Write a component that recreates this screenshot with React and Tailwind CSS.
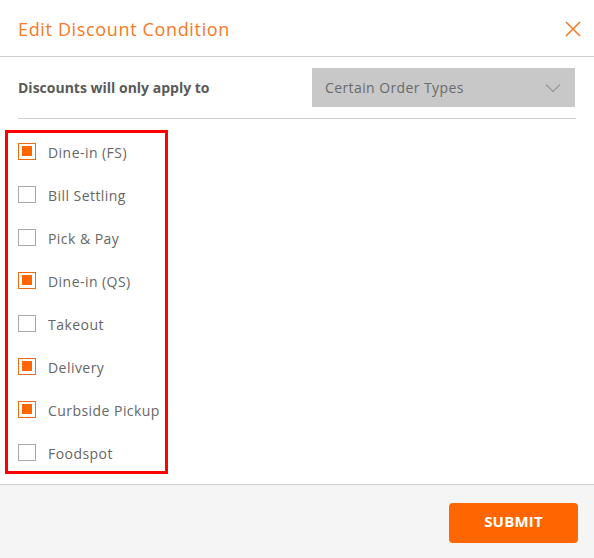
import React from "react";

const items = [
  ["Dine-in (FS)", true],
  ["Bill Settling", false],
  ["Pick & Pay", false],
  ["Dine-in (QS)", true],
  ["Takeout", false],
  ["Delivery", true],
  ["Curbside Pickup", true],
  ["Foodspot", false],
];

function Box({ checked }) {
  return checked ? (
    <div className="w-[18px] h-[17px] border border-[#f26a10] flex items-center justify-center bg-white">
      <div className="w-[10px] h-[10px] bg-[#ff6600]" />
    </div>
  ) : (
    <div className="w-[18px] h-[17px] border border-[#a8a8a8] bg-white" />
  );
}

export default function App() {
  return (
    <div
      className="w-[594px] h-[558px] bg-white flex flex-col"
      style={{ fontFamily: '"Open Sans", "Liberation Sans", sans-serif' }}
    >
      <div className="h-[57px] border-b border-[#cfcfcf] flex items-center justify-between pl-[18px] pr-[12px] pt-[3px] shrink-0">
        <div className="text-[18px] text-[#f47a25] tracking-[0.65px]">Edit Discount Condition</div>
        <svg width="18" height="18" viewBox="0 0 18 18" className="mt-[-2px]">
          <path d="M2 2 L16 16 M16 2 L2 16" stroke="#f47a25" strokeWidth="1.6" fill="none" />
        </svg>
      </div>
      <div className="px-[18px] shrink-0">
        <div className="flex items-center justify-between py-[11px] border-b border-[#cfcfcf]">
          <div className="text-[14px] font-bold text-[#5a5a5a]">Discounts will only apply to</div>
          <div className="w-[263px] h-[39px] bg-[#c8c8c8] flex items-center justify-between pl-[13px] pr-[14px] mr-[1px]">
            <span className="text-[14px] text-[#6a6a6a] tracking-[0.4px]">Certain Order Types</span>
            <svg width="16" height="10" viewBox="0 0 16 10">
              <path d="M1 1.5 L8 8.5 L15 1.5" stroke="#9a9a9a" strokeWidth="1.3" fill="none" />
            </svg>
          </div>
        </div>
      </div>
      <div className="flex-1 pl-[5px] pt-[11px]">
        <div className="w-[163px] border-[3px] border-[#ff0000] pl-[10px] pt-[9px] pb-[10px] flex flex-col gap-[25px]">
          {items.map(([label, checked]) => (
            <div key={label} className="h-[18px] flex items-center gap-[12px]">
              <Box checked={checked} />
              <span className="text-[14px] text-[#666] mt-[2px] whitespace-nowrap tracking-[0.45px]">{label}</span>
            </div>
          ))}
        </div>
      </div>
      <div className="h-[74px] border-t border-[#cfcfcf] bg-[#f5f5f5] flex justify-end pt-[18px] pr-[16px] shrink-0">
        <button className="w-[129px] h-[40px] rounded-[4px] bg-[#ff6600] text-white font-bold text-[15px] tracking-[0.2px] pb-[3px]">
          SUBMIT
        </button>
      </div>
    </div>
  );
}
